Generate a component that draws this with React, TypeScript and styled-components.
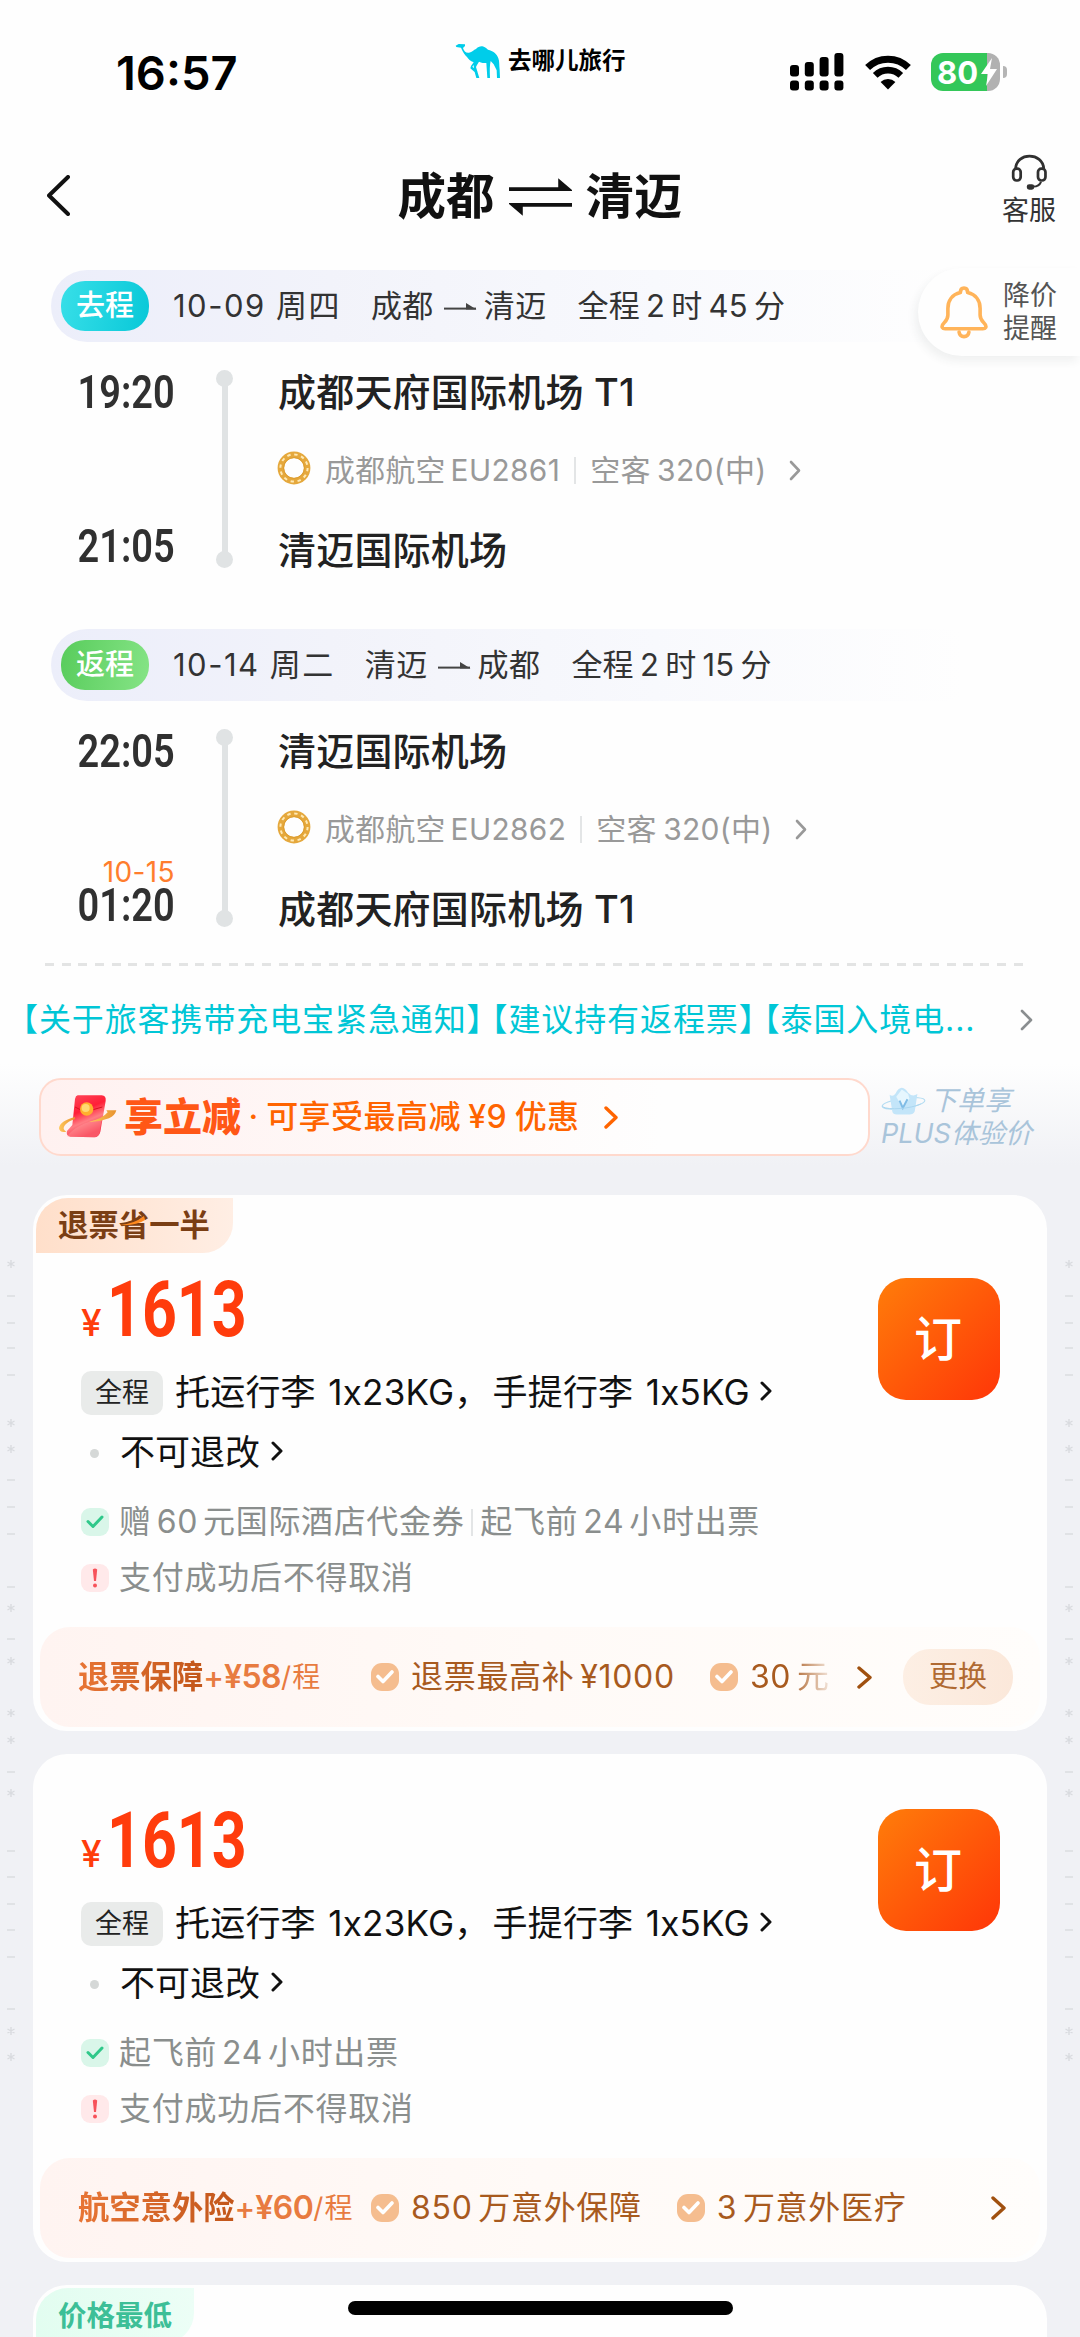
import React from "react";
import styled, { createGlobalStyle } from "styled-components";

const GlobalStyle = createGlobalStyle`
  * { box-sizing: border-box; }
  body {
    margin: 0;
    background: #f0f1f5;
    font-family: Inter, "Noto Sans CJK SC", sans-serif;
    -webkit-font-smoothing: antialiased;
  }
`;

const Page = styled.div`
  position: relative;
  display: flex;
  flex-direction: column;
  width: 1080px;
  height: 2337px;
  overflow: hidden;
  background: linear-gradient(#fefefe 0, #fefefe 1064px, #f0f1f5 1166px);
  > * { flex: none; }
`;

const Text = styled.span<{
  $size: number;
  $weight?: number;
  $color?: string;
  $track?: number;
  $word?: number;
  $left?: number;
}>`
  flex: none;
  white-space: pre;
  line-height: 1.3;
  font-size: ${(p) => p.$size}px;
  font-weight: ${(p) => p.$weight ?? 400};
  color: ${(p) => p.$color ?? "#333"};
  letter-spacing: ${(p) => p.$track ?? 0}px;
  word-spacing: ${(p) => p.$word ?? 0}px;
  margin-left: ${(p) => p.$left ?? 0}px;
`;

/* ---------- status bar ---------- */

const StatusBar = styled.header`
  display: grid;
  grid-template-columns: 455px 335px 1fr;
  align-items: center;
  height: 120px;
  padding-top: 24px;
`;

const Clock = styled.div`
  padding-left: 116px;
  font-size: 47px;
  font-weight: 600;
  color: #000;
`;

const Brand = styled.div`
  display: flex;
  align-items: center;
  gap: 7px;
  margin-top: -22px;
`;

const StatusIcons = styled.div`
  display: flex;
  align-items: center;
  svg + svg { margin-left: 21px; }
`;

const Battery = styled.div`
  position: relative;
  width: 69px;
  height: 38px;
  margin-left: 20px;
  border-radius: 12px;
  background: linear-gradient(90deg, #34c759 0 56px, #b1b1b1 56px);
  color: #fff;
  font-size: 31px;
  font-weight: 700;
  line-height: 39px;
  padding-left: 6px;
  &::after {
    content: "";
    position: absolute;
    left: 72px;
    top: 13px;
    width: 4px;
    height: 12px;
    border-radius: 0 4px 4px 0;
    background: #b5b5b5;
  }
  svg { position: absolute; left: 49px; top: 5px; }
`;

const Camel = () => (
  <svg width="46" height="36" viewBox="44 38 138 108" fill="#00cdea">
    <path d="M46 46 L55 41 L74 42 L74 47 L68 53 C70 62 78 69 86 67 C96 66 100 58 107 56 C112 50 120 47 126 48 C132 49 138 54 143 58 C158 62 170 70 174 84 C178 94 176 106 178 118 L179 143 L170 143 L169 120 L160 102 L151 92 C148 104 148 120 149 143 L141 143 L138 98 C130 98 124 98 116 94 L110 104 L107 110 L117 143 L108 143 L101 118 L100 104 L96 109 L112 124 L107 129 L90 114 L92 107 L100 96 C90 92 84 86 80 80 C74 74 68 66 62 52 L48 50 Z" />
  </svg>
);

const Signal = () => (
  <svg width="54" height="38" viewBox="0 0 54 38" fill="#000">
    {[12, 9, 4, 0].map((y, i) => (
      <React.Fragment key={i}>
        <rect x={i * 14.8} y={y} width="9" height={23.5 - y} rx="3" />
        <rect x={i * 14.8} y="27.5" width="9" height="10" rx="3" />
      </React.Fragment>
    ))}
  </svg>
);

const Wifi = () => (
  <svg width="46" height="35" viewBox="0 0 46 35" fill="none" stroke="#000">
    <path d="M2.6 12.6 A29 29 0 0 1 43.4 12.6" strokeWidth="7" />
    <path d="M10.2 20.4 A18.2 18.2 0 0 1 35.8 20.4" strokeWidth="6.6" />
    <path d="M15.6 27 A10.4 10.4 0 0 1 30.4 27 L23 34.4 Z" fill="#000" stroke="none" />
  </svg>
);

/* ---------- title bar ---------- */

const TitleBar = styled.div`
  display: grid;
  grid-template-columns: 200px 1fr 200px;
  align-items: center;
  height: 150px;
`;

const Back = styled.div`
  padding-left: 47px;
  line-height: 0;
`;

const Route = styled.h1`
  display: flex;
  align-items: center;
  justify-content: center;
  gap: 14px;
  margin: 4px 0 0;
`;

const Service = styled.div`
  display: flex;
  flex-direction: column;
  align-items: center;
  gap: 3px;
  padding-left: 98px;
  margin-top: -7px;
`;

/* ---------- itinerary ---------- */

const Leg = styled.section`
  & + & { margin-top: 61px; }
`;

const LegBar = styled.div`
  display: flex;
  align-items: center;
  height: 72px;
  width: 930px;
  margin-left: 51px;
  padding-left: 10px;
  border-radius: 36px;
  background: linear-gradient(90deg, #eceefa 0, #f2f3fa 30%, #f8f9fd 65%, #fefefe 98%);
`;

const LegBadge = styled.div<{ $from: string; $to: string }>`
  display: flex;
  align-items: center;
  justify-content: center;
  width: 88px;
  height: 50px;
  margin-right: 24px;
  border-radius: 24px;
  background: linear-gradient(100deg, ${(p) => p.$from}, ${(p) => p.$to});
`;

const LegBody = styled.div`
  display: grid;
  grid-template-columns: 175px 58px 1fr;
  height: 198px;
  margin-top: 28px;
`;

const Times = styled.div`
  display: flex;
  flex-direction: column;
  justify-content: space-between;
  align-items: flex-end;
`;

const Arrival = styled.div`
  display: flex;
  flex-direction: column;
  align-items: flex-end;
`;

const Time = styled.div`
  height: 44px;
  line-height: 44px;
  font-family: Roboto, sans-serif;
  font-size: 46px;
  font-weight: 600;
  color: #303030;
  transform: scaleX(0.825);
  transform-origin: right;
`;

const NextDay = styled.div`
  height: 22px;
  line-height: 22px;
  font-size: 28px;
  letter-spacing: 0.4px;
  color: #ff7d2d;
`;

const Rail = styled.div`
  display: flex;
  flex-direction: column;
  align-items: center;
  width: 17px;
  margin-left: 41px;
  &::before, &::after {
    content: "";
    width: 17px;
    height: 17px;
    border-radius: 50%;
    background: #e0e3e4;
  }
`;

const RailLine = styled.div`
  flex: 1;
  width: 6px;
  margin: -2px 0;
  background: #e0e3e4;
`;

const Stops = styled.div`
  display: flex;
  flex-direction: column;
  justify-content: space-between;
  padding-left: 45px;
  margin: 1px 0 -5px;
`;

const Stop = styled.div`
  display: flex;
  align-items: center;
  height: 44px;
`;

const Carrier = styled(Stop)`
  margin-top: -3px;
`;

const Separator = styled.i<{ $gap: number }>`
  width: 2px;
  height: 27px;
  margin: 0 ${(p) => p.$gap}px;
  background: #e3e5e6;
`;

const ChevronSvg = styled.svg<{ $left: number; $lift: number }>`
  flex: none;
  margin-left: ${(p) => p.$left}px;
  margin-bottom: ${(p) => p.$lift}px;
`;

const Chevron = ({ w, h, color, stroke = 3, left = 0, lift = 0, flip = false }: {
  w: number; h: number; color: string; stroke?: number; left?: number; lift?: number; flip?: boolean;
}) => (
  <ChevronSvg width={w + 4} height={h + 4} viewBox={`-2 -2 ${w + 4} ${h + 4}`} $left={left} $lift={lift}>
    <path
      d={flip ? `M${w} 0 L0 ${h / 2} L${w} ${h}` : `M0 0 L${w} ${h / 2} L0 ${h}`}
      fill="none" stroke={color} strokeWidth={stroke} strokeLinecap="round" strokeLinejoin="round"
    />
  </ChevronSvg>
);

const RingSvg = styled.svg`
  margin: -5px 14px 0 -1px;
`;

const RingLogo = () => (
  <RingSvg width="34" height="34" viewBox="0 0 34 34" fill="none">
    <circle cx="17" cy="17" r="13.2" stroke="#e5a83c" strokeWidth="6.4" />
    <circle cx="17" cy="17" r="13.6" stroke="#ffe9b4" strokeWidth="2" strokeDasharray="3.4 3.7" />
    <circle cx="17" cy="17" r="10.4" stroke="#dd9c2c" strokeWidth="1" />
  </RingSvg>
);

const ArrowSvg = styled.svg`
  margin: 0 7px 0 10px;
`;

const SmallArrow = () => (
  <ArrowSvg width="33" height="12" viewBox="0 0 33 12">
    <path d="M0 8.6 H32" stroke="#444" strokeWidth="2" />
    <path d="M22 3 L32.5 9.6 H22Z" fill="#444" />
  </ArrowSvg>
);

const PriceAlert = styled.div`
  position: absolute;
  right: 0;
  top: 268px;
  display: flex;
  align-items: center;
  gap: 15px;
  width: 162px;
  height: 88px;
  padding-left: 22px;
  border-radius: 44px 0 0 44px;
  background: #fefefe;
  box-shadow: -3px 5px 10px rgba(40, 50, 60, 0.07);
`;

const Stacked = styled.div`
  display: flex;
  flex-direction: column;
`;

const AlertLine = styled(Text)`
  line-height: 33px;
  height: 33px;
`;

const DashedRule = styled.div`
  height: 3px;
  margin: 36px 50px 0 45px;
  background: repeating-linear-gradient(90deg, #e3e4e4 0 9px, transparent 9px 16.7px);
`;

/* ---------- notice ---------- */

const Notice = styled.div`
  display: flex;
  align-items: center;
  height: 60px;
  margin-top: 24px;
  padding-left: 22px;
`;

const Bracket = styled.span<{ $pull?: number }>`
  font-feature-settings: "halt";
  margin-right: ${(p) => p.$pull ?? 0}px;
`;

/* ---------- promo ---------- */

const PromoRow = styled.div`
  display: flex;
  align-items: center;
  height: 78px;
  margin: 28px 0 39px 39px;
`;

const Promo = styled.div`
  display: flex;
  align-items: center;
  width: 831px;
  height: 78px;
  padding-left: 16px;
  border: 2px solid #ffd9cd;
  border-radius: 22px;
  background: linear-gradient(90deg, #fff1f0, #fefefe 75%);
`;

const Plus = styled.div`
  display: flex;
  flex-direction: column;
  margin-left: 11px;
`;

const PlusLine = styled.div`
  display: flex;
  align-items: center;
  height: 33px;
  gap: 4px;
  font-style: italic;
`;

const Envelope = () => (
  <svg width="62" height="48" viewBox="80 70 186 144">
    <defs>
      <linearGradient id="env" x1="0" y1="0" x2="0.4" y2="1">
        <stop offset="0" stopColor="#ff4a5c" />
        <stop offset="0.45" stopColor="#ff1f38" />
        <stop offset="0.7" stopColor="#ff7d84" />
        <stop offset="1" stopColor="#f5213c" />
      </linearGradient>
      <linearGradient id="gold" x1="0" y1="0" x2="1" y2="0">
        <stop offset="0" stopColor="#ffc85c" />
        <stop offset="1" stopColor="#e8922e" />
      </linearGradient>
    </defs>
    <path d="M142 77 H214 Q228 78 226 94 L210 186 Q206 202 192 203 L120 201 Q106 198 110 184 L126 166 L134 88 Q136 78 142 77Z" fill="url(#env)" />
    <path d="M110 200 Q140 160 214 148 L208 190 Q204 202 192 203 L120 201Z" fill="#ff9a9c" opacity="0.45" />
    <path d="M134 112 Q160 132 216 112" fill="none" stroke="#d8101f" strokeWidth="3" />
    <path d="M134 142 Q88 154 86 176 Q88 190 108 186 Q94 178 104 166 Q114 154 134 148Z" fill="url(#gold)" />
    <path d="M176 156 Q216 148 232 128 L228 122 L258 122 Q254 138 236 146 Q206 158 176 156Z" fill="url(#gold)" />
    <circle cx="169" cy="118" r="20" fill="#ffb02e" />
    <circle cx="166" cy="115" r="12" fill="#ffd873" />
  </svg>
);

const Diamond = () => (
  <svg width="45" height="30" viewBox="38 38 136 90" fill="none">
    <ellipse cx="106" cy="90" rx="65" ry="15" transform="rotate(-8 106 90)" stroke="#b3dcf2" strokeWidth="3.4" />
    <path d="M64 64 Q74 72 82 60 Q90 44 101 43 Q112 44 120 58 Q132 72 148 62 L140 114 Q136 124 124 124 L86 124 Q74 124 72 114Z" fill="#c3e5f9" />
    <path d="M84 70 L101 48 L120 62 L124 76 L104 106Z" fill="#e6f6fe" />
    <path d="M94 82 L104 104 L118 78" stroke="#7fbce6" strokeWidth="6" />
    <path d="M42 100 C60 112 130 106 158 92" stroke="#a9d6ef" strokeWidth="3" />
  </svg>
);

/* ---------- fare cards ---------- */

const Card = styled.article<{ $min?: number }>`
  position: relative;
  flex: none;
  display: flex;
  flex-direction: column;
  width: 1014px;
  min-height: ${(p) => p.$min ?? 0}px;
  margin: 0 0 23px 33px;
  padding-top: 3px;
  border-radius: 34px;
  background: #fefefe;
`;

const CornerTag = styled.div<{ $bg: string; $width: number }>`
  position: relative;
  display: flex;
  align-items: center;
  width: ${(p) => p.$width}px;
  height: 55px;
  margin-left: 3px;
  padding-left: 22px;
  border-radius: 32px 0 30px 0;
  background: ${(p) => p.$bg};
`;

const Swash = styled.svg`
  position: absolute;
  left: 84px;
  top: 18px;
`;

const FareBody = styled.div<{ $top: number }>`
  display: flex;
  justify-content: space-between;
  padding: ${(p) => p.$top}px 47px 0 48px;
`;

const FareInfo = styled.div`
  display: flex;
  flex-direction: column;
`;

const PriceRow = styled.div`
  display: flex;
  align-items: baseline;
  height: 112px;
`;

const Amount = styled.span`
  font-family: Roboto, sans-serif;
  font-size: 77px;
  font-weight: 700;
  line-height: 114px;
  color: #ff3c0c;
  transform: scaleX(0.79);
  transform-origin: left;
`;

const Line = styled.div<{ $h: number; $top?: number }>`
  display: flex;
  align-items: center;
  height: ${(p) => p.$h}px;
  margin-top: ${(p) => p.$top ?? 0}px;
`;

const Scope = styled.div`
  display: flex;
  align-items: center;
  justify-content: center;
  width: 82px;
  height: 44px;
  margin-right: 12px;
  border-radius: 10px;
  background: #e9ebea;
`;

const Bullet = styled.i`
  width: 9px;
  height: 9px;
  margin: 0 21px 0 9px;
  border-radius: 50%;
  background: #d5d8d7;
`;

const Mark = styled.div<{ $bg: string }>`
  display: flex;
  align-items: center;
  justify-content: center;
  width: 28px;
  height: 28px;
  margin-right: 10px;
  border-radius: 9px;
  background: ${(p) => p.$bg};
`;

const Grey = styled(Text)`
  color: #8a8e8d;
`;

const BookButton = styled.button`
  width: 122px;
  height: 122px;
  margin-top: 25px;
  padding: 0 2px 0 0;
  border: 0;
  border-radius: 28px;
  background: linear-gradient(135deg, #ff7d0a, #ff3608);
  color: #fff;
  font: 500 48px/120px Inter, "Noto Sans CJK SC", sans-serif;
`;

const Insurance = styled.div`
  display: flex;
  align-items: center;
  height: 100px;
  margin: 22px 7px 4px;
  padding: 0 27px 0 39px;
  border-radius: 30px;
  background: linear-gradient(90deg, #fff4f1, #fffaf7 50%, #fffdfb);
`;

const InsuranceName = styled.div`
  display: flex;
  align-items: center;
  width: 293px;
  margin-left: -1px;
`;

const GradientText = styled(Text)`
  color: transparent;
  background: linear-gradient(90deg, #e87535, #c2561a);
  background-clip: text;
  -webkit-background-clip: text;
`;

const Benefit = styled.div<{ $gap: number; $fade?: boolean }>`
  display: flex;
  align-items: center;
  margin-right: ${(p) => p.$gap}px;
  ${(p) => p.$fade && "mask-image: linear-gradient(90deg, #000 66%, transparent 105%);"}
`;

const Dot = styled.div`
  display: flex;
  align-items: center;
  justify-content: center;
  width: 28px;
  height: 28px;
  margin-right: 12px;
  border-radius: 11px;
  background: #f5bd8f;
`;

const Swap = styled.div`
  display: flex;
  align-items: center;
  justify-content: center;
  width: 110px;
  height: 56px;
  margin-left: auto;
  border-radius: 27px;
  background: linear-gradient(90deg, #fdefe4, #fbe8da);
`;

const HomeIndicator = styled.div`
  position: absolute;
  left: 348px;
  bottom: 22px;
  width: 385px;
  height: 14px;
  border-radius: 7px;
  background: #000;
`;

/* ---------- watermark at both page edges ---------- */

const Edge = styled.svg<{ $side: "left" | "right" }>`
  position: absolute;
  top: 1250px;
  ${(p) => p.$side}: 5px;
`;

const stars = [1264, 1423, 1449, 1608, 1661, 1713, 1740, 1793, 2031, 2057];
const bars = [1296, 1323, 1348, 1375, 1480, 1507, 1534, 1587, 1639, 1772, 1851, 1877, 1904, 1930, 1957, 2009];

const Watermark = ({ side }: { side: "left" | "right" }) => (
  <Edge $side={side} width="12" height="820" viewBox="0 1250 12 820" stroke="#d9dbdf" strokeWidth="1.4">
    {stars.map((y) => (
      <path key={y} d={`M6 ${y - 4} V${y + 4} M2.5 ${y - 2} L9.5 ${y + 2} M9.5 ${y - 2} L2.5 ${y + 2}`} />
    ))}
    {bars.map((y) => <path key={y} d={`M2 ${y} H10`} />)}
  </Edge>
);

/* ---------- composed parts ---------- */

const Tick = ({ color, width = 3 }: { color: string; width?: number }) => (
  <svg width="18" height="14" viewBox="0 0 18 14" fill="none" stroke={color} strokeWidth={width} strokeLinecap="round" strokeLinejoin="round">
    <path d="M2 6.5 L7 11.5 L16 2" />
  </svg>
);

type LegData = {
  badge: string; from: string; to: string; date: string; a: string; b: string; total: string;
  depart: string; arrive: string; nextDay?: string; origin: string; dest: string; flight: string;
};

const LegBlock = ({ leg }: { leg: LegData }) => (
  <Leg>
    <LegBar>
      <LegBadge $from={leg.from} $to={leg.to}>
        <Text $size={29} $weight={500} $color="#fff">{leg.badge}</Text>
      </LegBadge>
      <Text $size={31} $track={1.5} $word={0}>{leg.date}</Text>
      <Text $size={31} $track={0.4} $left={30}>{leg.a}</Text>
      <SmallArrow />
      <Text $size={31} $track={0.4}>{leg.b}</Text>
      <Text $size={31} $track={0.2} $word={-2.8} $left={31}>{leg.total}</Text>
    </LegBar>
    <LegBody>
      <Times>
        <Time>{leg.depart}</Time>
        <Arrival>
          {leg.nextDay && <NextDay>{leg.nextDay}</NextDay>}
          <Time>{leg.arrive}</Time>
        </Arrival>
      </Times>
      <Rail><RailLine /></Rail>
      <Stops>
        <Stop><Text $size={38} $weight={500} $color="#222" $track={0.2}>{leg.origin}</Text></Stop>
        <Carrier>
          <RingLogo />
          <Text $size={29.8} $color="#999" $track={0.4} $word={-4}>{"成都航空 " + leg.flight}</Text>
          <Separator $gap={14} />
          <Text $size={30} $color="#999" $track={0.3} $word={-2.5}>空客 320(中)</Text>
          <Chevron w={8} h={17} color="#999" left={22} stroke={2.6} />
        </Carrier>
        <Stop><Text $size={38} $weight={500} $color="#222" $track={0.2}>{leg.dest}</Text></Stop>
      </Stops>
    </LegBody>
  </Leg>
);

const legs: LegData[] = [
  {
    badge: "去程", from: "#38dfe8", to: "#08c8d8", date: "10-09 周四", a: "成都", b: "清迈",
    total: "全程 2 时 45 分", depart: "19:20", arrive: "21:05",
    origin: "成都天府国际机场 T1", dest: "清迈国际机场", flight: "EU2861",
  },
  {
    badge: "返程", from: "#58cc5c", to: "#86e486", date: "10-14 周二", a: "清迈", b: "成都",
    total: "全程 2 时 15 分", depart: "22:05", arrive: "01:20", nextDay: "10-15",
    origin: "清迈国际机场", dest: "成都天府国际机场 T1", flight: "EU2862",
  },
];

const Fare = ({ top, benefits }: { top: number; benefits: React.ReactNode }) => (
  <FareBody $top={top}>
    <FareInfo>
      <PriceRow>
        <Text $size={37} $weight={500} $color="#ff3c0c" $track={5}>¥</Text>
        <Amount>1613</Amount>
      </PriceRow>
      <Line $h={56}>
        <Scope><Text $size={27} $color="#222">全程</Text></Scope>
        <Text $size={35} $color="#111" $track={0.2} $word={2.5}>托运行李 1x23KG，</Text>
        <Text $size={35} $color="#111" $track={0.2} $word={2.5} $left={3}>手提行李 1x5KG</Text>
        <Chevron w={8} h={16} color="#111" left={10} lift={5} />
      </Line>
      <Line $h={64}>
        <Bullet />
        <Text $size={35} $color="#111">不可退改</Text>
        <Chevron w={8} h={16} color="#111" left={11} lift={5} />
      </Line>
      <Line $h={56} $top={9}>
        <Mark $bg="#d9f6e9"><Tick color="#2fc88a" /></Mark>
        {benefits}
      </Line>
      <Line $h={55}>
        <Mark $bg="#ffe9ea">
          <svg width="6" height="20" viewBox="0 0 6 20" fill="#f7525a">
            <path d="M0.8 1.6 Q3 -0.6 5.2 1.6 L4 13 H2Z" />
            <circle cx="3" cy="17.4" r="2" />
          </svg>
        </Mark>
        <Grey $size={32} $track={0.75}>支付成功后不得取消</Grey>
      </Line>
    </FareInfo>
    <BookButton>订</BookButton>
  </FareBody>
);

const PlanName = ({ name, price }: { name: string; price: string }) => (
  <InsuranceName>
    <GradientText $size={31.3} $weight={700}>{name}</GradientText>
    <Text $size={31} $weight={500} $color="#e87b40">+</Text>
    <Text $size={32} $weight={600} $color="#e87b40" $track={-0.5}>¥{price}</Text>
    <Text $size={28} $color="#e87b40" $track={1}>/程</Text>
  </InsuranceName>
);

const Perk = ({ gap, fade, children }: { gap: number; fade?: boolean; children: string }) => (
  <Benefit $gap={gap} $fade={fade}>
    <Dot><Tick color="#fff" width={3.6} /></Dot>
    <Text $size={32} $track={0.7} $word={-4} $color="#a85a1e">{children}</Text>
  </Benefit>
);

export default function App() {
  return (
    <Page>
      <GlobalStyle />
      <StatusBar>
        <Clock>16:57</Clock>
        <Brand>
          <Camel />
          <Text $size={23.5} $weight={700} $color="#000">去哪儿旅行</Text>
        </Brand>
        <StatusIcons>
          <Signal />
          <Wifi />
          <Battery>
            80
            <svg width="18" height="28" viewBox="0 0 18 28" fill="#fff">
              <path d="M12 0 L1 16 H8 L6 28 L17 11 H10Z" />
            </svg>
          </Battery>
        </StatusIcons>
      </StatusBar>

      <TitleBar>
        <Back><Chevron w={19} h={37} color="#111" stroke={4} flip /></Back>
        <Route>
          <Text $size={48.5} $weight={700} $color="#111">成都</Text>
          <svg width="63" height="38" viewBox="0 0 64 38" fill="#111">
            <path d="M0 9 H50 V0 L64 12 V13 H0Z" />
            <path d="M64 29 H14 V38 L0 26 V25 H64Z" />
          </svg>
          <Text $size={48.5} $weight={700} $color="#111">清迈</Text>
        </Route>
        <Service>
          <svg width="37" height="36" viewBox="334 66 108 106" fill="none" stroke="#303030" strokeWidth="8">
            <path d="M347 110 C348 60 428 60 430 110" />
            <rect x="340" y="109" width="22" height="35" rx="10" />
            <rect x="413" y="109" width="22" height="35" rx="10" />
            <path d="M422 148 Q416 162 400 162" strokeWidth="6" />
            <rect x="384" y="159" width="14" height="8" rx="3" fill="#303030" />
          </svg>
          <Text $size={27}>客服</Text>
        </Service>
      </TitleBar>

      {legs.map((leg) => <LegBlock key={leg.badge} leg={leg} />)}

      <PriceAlert>
        <svg width="48" height="54" viewBox="118 472 146 162" fill="none" stroke="#ffb45a" strokeWidth="11" strokeLinejoin="round">
          <path d="M180 494 Q180 480 191 480 Q202 480 202 494 C228 500 240 520 240 542 V562 Q240 574 250 584 Q260 594 257 600 Q255 604 248 604 H134 Q127 604 125 600 Q122 594 132 584 Q142 574 142 562 V542 C142 520 154 500 180 494Z" />
          <path d="M176 614 Q178 628 191 628 Q204 628 206 614" strokeLinecap="round" />
        </svg>
        <Stacked>
          <AlertLine $size={27} $color="#555">降价</AlertLine>
          <AlertLine $size={27} $color="#555">提醒</AlertLine>
        </Stacked>
      </PriceAlert>

      <DashedRule />

      <Notice>
        <Text $size={32} $track={0.9} $color="#00c6d6">
          <Bracket>【</Bracket>关于旅客携带充电宝紧急通知<Bracket $pull={8}>】</Bracket>
          <Bracket>【</Bracket>建议持有返程票<Bracket $pull={8}>】</Bracket>
          <Bracket>【</Bracket>泰国入境电...
        </Text>
        <Chevron w={9} h={18} color="#8a8e90" left={45} stroke={2.6} />
      </Notice>

      <PromoRow>
        <Promo>
          <Envelope />
          <Text $size={39} $weight={900} $color="#ff5716" $left={5}>享立减</Text>
          <Text $size={32} $weight={500} $color="#ff6400" $track={0.45} $word={-1.5}>{" · 可享受最高减 ¥9 优惠"}</Text>
          <Chevron w={10} h={19} color="#ff6400" left={24} stroke={3.4} />
        </Promo>
        <Plus>
          <PlusLine>
            <Diamond />
            <Text $size={27} $color="#a9c4da">下单享</Text>
          </PlusLine>
          <PlusLine><Text $size={27} $color="#a9c4da">PLUS体验价</Text></PlusLine>
        </Plus>
      </PromoRow>

      <Watermark side="left" />
      <Watermark side="right" />

      <Card>
        <CornerTag $bg="linear-gradient(90deg, #ffdfca, #ffeee4)" $width={197}>
          <Text $size={30.4} $weight={700} $color="#7a3e14">退票省一半</Text>
          <Swash width="26" height="10" viewBox="0 0 26 10">
            <path d="M0 9 Q14 8 24 0 L25 4 Q16 10 0 9Z" fill="#ff8a1e" />
          </Swash>
        </CornerTag>
        <Fare
          top={0}
          benefits={
            <>
              <Grey $size={32} $track={0.65} $word={-4.6}>赠 60 元国际酒店代金券</Grey>
              <Separator $gap={7} />
              <Grey $size={32} $track={0.65} $word={-4.6}>起飞前 24 小时出票</Grey>
            </>
          }
        />
        <Insurance>
          <PlanName name="退票保障" price="58" />
          <Perk gap={35}>退票最高补 ¥1000</Perk>
          <Perk gap={27} fade>30 元</Perk>
          <Chevron w={11} h={19} color="#a0500f" stroke={3.4} />
          <Swap><Text $size={29} $color="#b06a32">更换</Text></Swap>
        </Insurance>
      </Card>

      <Card>
        <Fare top={27} benefits={<Grey $size={32} $track={0.65} $word={-4.6}>起飞前 24 小时出票</Grey>} />
        <Insurance>
          <PlanName name="航空意外险" price="60" />
          <Perk gap={35}>850 万意外保障</Perk>
          <Perk gap={85}>3 万意外医疗</Perk>
          <Chevron w={11} h={20} color="#a0500f" stroke={3.4} />
        </Insurance>
      </Card>

      <Card $min={120}>
        <CornerTag $bg="linear-gradient(90deg, #e2fdf0, #ecfef6)" $width={158}>
          <Text $size={28.5} $weight={700} $color="#3dbf97">价格最低</Text>
        </CornerTag>
      </Card>

      <HomeIndicator />
    </Page>
  );
}
